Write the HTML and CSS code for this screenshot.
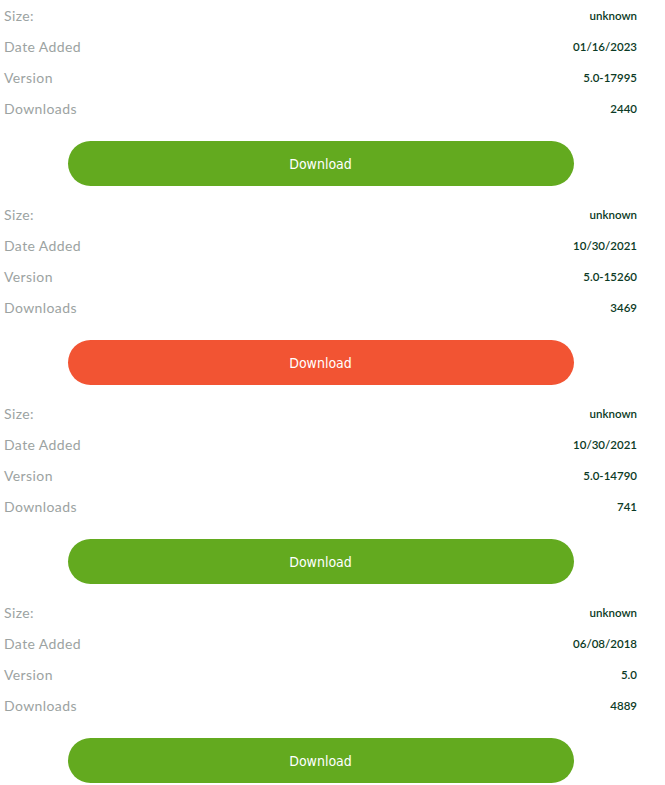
FILE: index.html
```html
<!DOCTYPE html>
<html>
<head>
<meta charset="utf-8">
<link rel="stylesheet" href="styles.css">
</head>
<body>
<div class="list">
  <section class="item">
    <div class="row"><span class="label">Size:</span><span class="value">unknown</span></div>
    <div class="row"><span class="label">Date Added</span><span class="value">01/16/2023</span></div>
    <div class="row"><span class="label">Version</span><span class="value">5.0-17995</span></div>
    <div class="row"><span class="label">Downloads</span><span class="value">2440</span></div>
    <a class="btn btn-green" href="#">Download</a>
  </section>
  <section class="item">
    <div class="row"><span class="label">Size:</span><span class="value">unknown</span></div>
    <div class="row"><span class="label">Date Added</span><span class="value">10/30/2021</span></div>
    <div class="row"><span class="label">Version</span><span class="value">5.0-15260</span></div>
    <div class="row"><span class="label">Downloads</span><span class="value">3469</span></div>
    <a class="btn btn-red" href="#">Download</a>
  </section>
  <section class="item">
    <div class="row"><span class="label">Size:</span><span class="value">unknown</span></div>
    <div class="row"><span class="label">Date Added</span><span class="value">10/30/2021</span></div>
    <div class="row"><span class="label">Version</span><span class="value">5.0-14790</span></div>
    <div class="row"><span class="label">Downloads</span><span class="value">741</span></div>
    <a class="btn btn-green" href="#">Download</a>
  </section>
  <section class="item">
    <div class="row"><span class="label">Size:</span><span class="value">unknown</span></div>
    <div class="row"><span class="label">Date Added</span><span class="value">06/08/2018</span></div>
    <div class="row"><span class="label">Version</span><span class="value">5.0</span></div>
    <div class="row"><span class="label">Downloads</span><span class="value">4889</span></div>
    <a class="btn btn-green" href="#">Download</a>
  </section>
</div>
</body>
</html>
```
FILE: styles.css
```css
html, body {
  margin: 0;
  padding: 0;
  background: #ffffff;
}
.list {
  width: 633px;
  padding: 0 28px 0 4px;
  display: flex;
  flex-direction: column;
}
.item {
  display: flex;
  flex-direction: column;
  padding-bottom: 13px;
}
.row {
  height: 31px;
  display: flex;
  justify-content: space-between;
  align-items: center;
}
.label {
  font-family: "Lato", "Noto Sans", sans-serif;
  font-size: 14px;
  color: #9ca3a2;
  letter-spacing: 0.4px;
}
.value {
  font-family: "Lato", "Noto Sans", sans-serif;
  font-size: 11.5px;
  font-weight: 600;
  color: #0b3a25;
}
.btn {
  align-self: center;
  margin-top: 17px;
  width: 506px;
  height: 45px;
  border-radius: 23px;
  display: flex;
  align-items: center;
  justify-content: center;
  font-family: "DejaVu Sans Condensed", "DejaVu Sans", sans-serif;
  font-size: 14px;
  color: #ffffff;
  text-decoration: none;
}
.btn-green { background: #63aa1f; }
.btn-red { background: #f25433; }
```
